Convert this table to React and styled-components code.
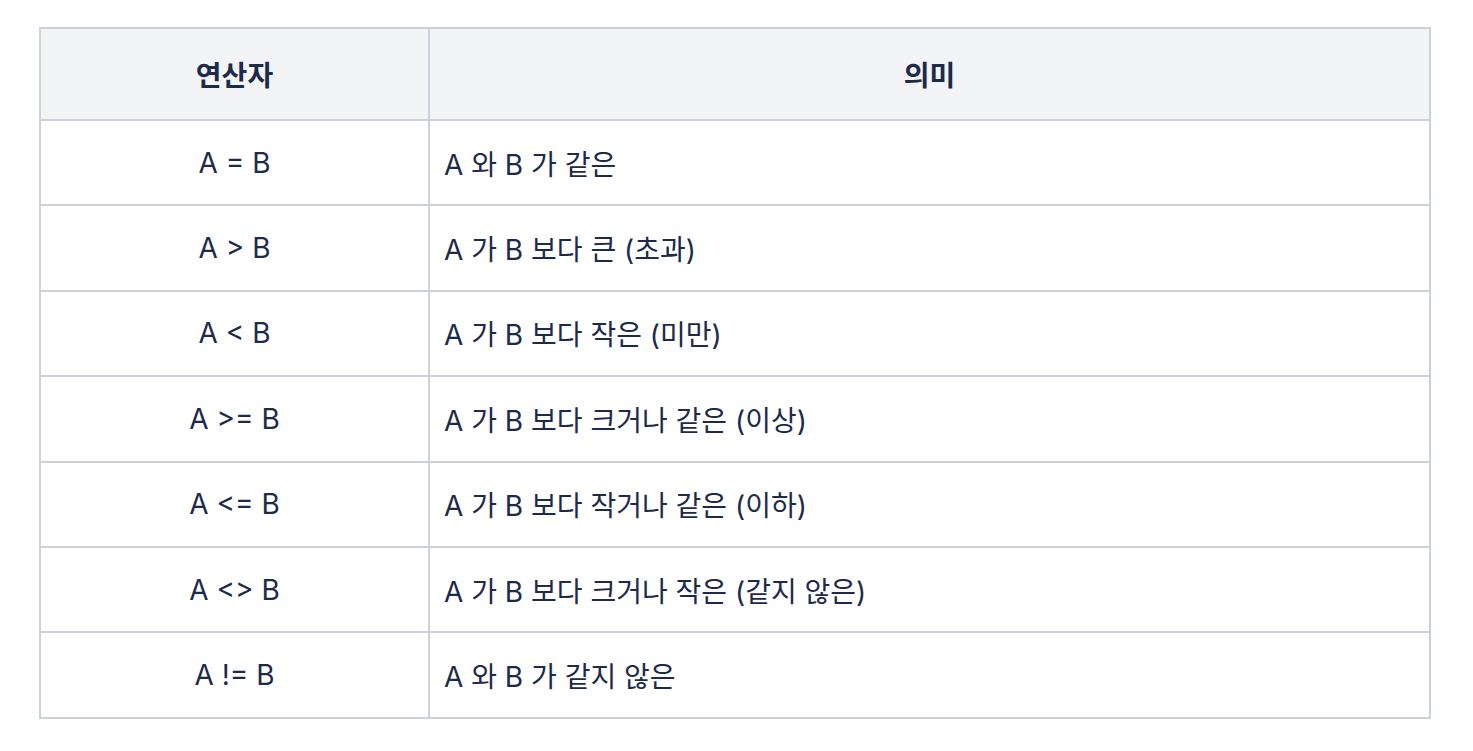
import styled, { createGlobalStyle } from "styled-components";

const GlobalStyle = createGlobalStyle`
  body {
    margin: 0;
    background: #ffffff;
    font-family: Inter, "Noto Sans CJK KR", sans-serif;
  }
`;

const Page = styled.div`
  padding: 27px 0 0 39px;
`;

const Table = styled.table`
  width: 1392px;
  table-layout: fixed;
  border-collapse: collapse;
  border: 2px solid #cdd1d9;
  color: #1e2a4a;
  font-size: 28px;
`;

const Col = styled.col`
  width: ${(p) => p.$width || "auto"};
`;

const HeadCell = styled.th`
  height: 90px;
  padding: 0 14px;
  border: 2px solid #cdd1d9;
  background: #f3f4f6;
  font-weight: 700;
  text-align: center;
`;

const Cell = styled.td`
  height: 83.4px;
  padding: 0 14px;
  border: 2px solid #cdd1d9;
  text-align: ${(p) => (p.$center ? "center" : "left")};
`;

const rows = [
  ["A = B", "A 와 B 가 같은"],
  ["A > B", "A 가 B 보다 큰 (초과)"],
  ["A < B", "A 가 B 보다 작은 (미만)"],
  ["A >= B", "A 가 B 보다 크거나 같은 (이상)"],
  ["A <= B", "A 가 B 보다 작거나 같은 (이하)"],
  ["A <> B", "A 가 B 보다 크거나 작은 (같지 않은)"],
  ["A != B", "A 와 B 가 같지 않은"],
];

export default function App() {
  return (
    <>
      <GlobalStyle />
      <Page>
        <Table>
          <colgroup>
            <Col $width="389px" />
            <Col />
          </colgroup>
          <thead>
            <tr>
              <HeadCell>연산자</HeadCell>
              <HeadCell>의미</HeadCell>
            </tr>
          </thead>
          <tbody>
            {rows.map(([op, meaning]) => (
              <tr key={op}>
                <Cell $center>{op}</Cell>
                <Cell>{meaning}</Cell>
              </tr>
            ))}
          </tbody>
        </Table>
      </Page>
    </>
  );
}
